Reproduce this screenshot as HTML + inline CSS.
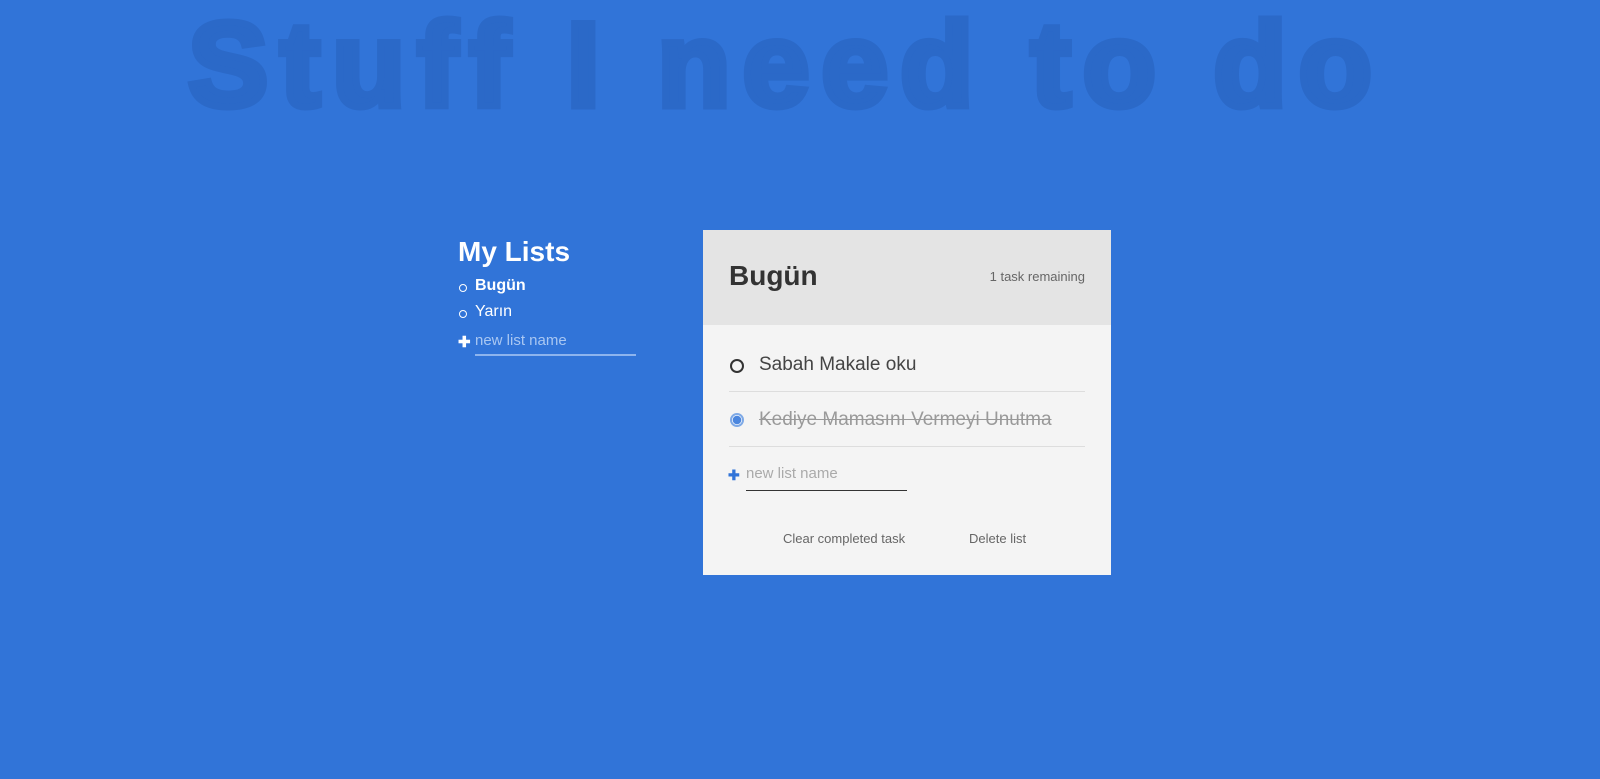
<!DOCTYPE html>
<html><head><meta charset="utf-8"><style>
*{margin:0;padding:0;box-sizing:border-box}
body{width:1600px;height:779px;background:#3174d8;font-family:"Liberation Sans",sans-serif;position:relative;overflow:hidden}
.title{position:absolute;left:-28px;right:0;top:5px;text-align:center;font-size:120px;font-weight:bold;color:#2b69c8;letter-spacing:12px;-webkit-text-stroke:7px #2b69c8;line-height:120px;white-space:nowrap}
.side{position:absolute;left:458px;top:236px;color:#fff}
.side h2{font-size:28px;font-weight:bold;line-height:32px}
.side li{list-style:none;position:relative;padding-left:17px;font-size:16px;height:26px;line-height:26px}
.side li:before{content:"";position:absolute;left:1px;top:11px;width:6px;height:6px;border:1.2px solid #fff;border-radius:50%}
.plus{position:absolute;font-weight:bold;font-size:15px}
.card{position:absolute;left:703px;top:230px;width:408px;height:345px;background:#f4f4f4}
.head{height:95px;background:#e4e4e4;position:relative}
.head h1{position:absolute;left:26px;top:30px;font-size:28px;color:#333;font-weight:bold}
.rem{position:absolute;right:26px;top:39px;font-size:13px;color:#666}
.task{position:absolute;left:26px;width:356px;height:55px;border-bottom:1px solid #ddd;font-size:19px;color:#444}
.circ{position:absolute;left:1px;width:14px;height:14px;border-radius:50%}
</style></head><body>
<div class="title">Stuff I need to do</div>
<div class="side">
<h2>My Lists</h2>
<ul style="margin-top:5px">
<li style="font-weight:bold">Bugün</li>
<li>Yarın</li>
</ul>
<div class="plus" style="left:0;top:97px">✚</div>
<div style="position:absolute;left:17px;top:96px;width:161px;height:24px;border-bottom:2px solid #8db4ee;color:#a9c7f2;font-size:15px;white-space:nowrap">new list name</div>
</div>
<div class="card">
<div class="head"><h1>Bugün</h1><div class="rem">1 task remaining</div></div>
<div class="task" style="top:107px;height:55px"><div class="circ" style="top:22px;border:2px solid #333"></div><div style="position:absolute;left:30px;top:17px">Sabah Makale oku</div></div>
<div class="task" style="top:162px;height:55px"><div class="circ" style="top:21px;border:2px solid #7ea9e6;background:radial-gradient(#4b86de 0 4px,#fff 4.5px)"></div><div style="position:absolute;left:30px;top:17px;color:#999;text-decoration:line-through;white-space:nowrap">Kediye Mamasını Vermeyi Unutma</div></div>
<div class="plus" style="left:25px;top:237px;color:#3174d8;font-size:14px">✚</div>
<div style="position:absolute;left:43px;top:235px;width:161px;height:26px;border-bottom:1.5px solid #333;color:#aaa;font-size:15px">new list name</div>
<div style="position:absolute;left:80px;top:301px;font-size:13px;color:#666">Clear completed task</div>
<div style="position:absolute;left:266px;top:301px;font-size:13px;color:#666">Delete list</div>
</div>
</body></html>
